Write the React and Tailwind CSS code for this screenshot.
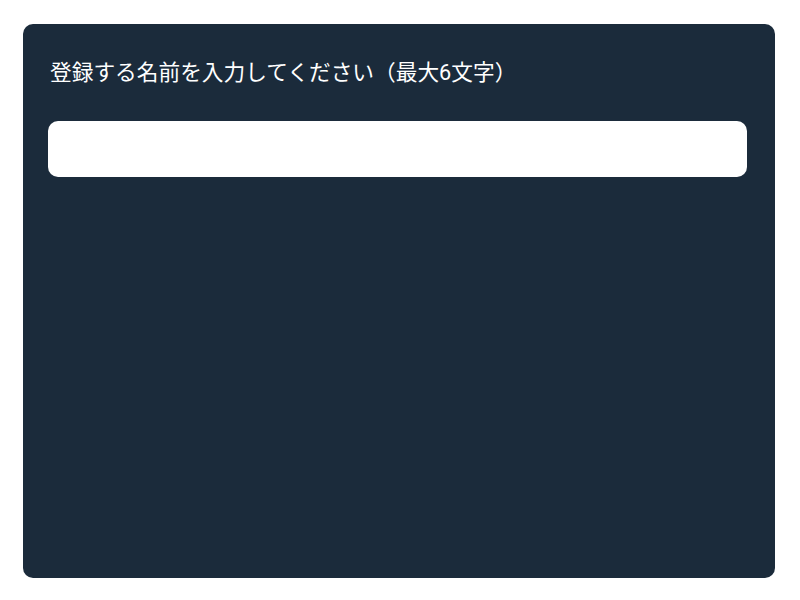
import React, { useState } from "react";

const App = () => {
  const [name, setName] = useState("");

  return (
    <div className="w-[800px] h-[600px] bg-white pt-[24px] pl-[23px]">
      <div
        className="w-[752px] h-[554px] bg-[#1b2b3b] rounded-[10px] pt-[32px] pl-[25px] pr-[28px]"
        style={{ fontFamily: '"Roboto", "Noto Sans CJK JP", sans-serif' }}
      >
        <h2 className="text-white text-[21.7px] leading-[34px] pl-[2px]">
          登録する名前を入力してください（最大6文字）
        </h2>
        <input
          type="text"
          maxLength={6}
          value={name}
          onChange={(e) => setName(e.target.value)}
          className="mt-[31px] w-full h-[56px] bg-white rounded-[10px] px-4 text-lg outline-none"
        />
      </div>
    </div>
  );
};

export default App;
